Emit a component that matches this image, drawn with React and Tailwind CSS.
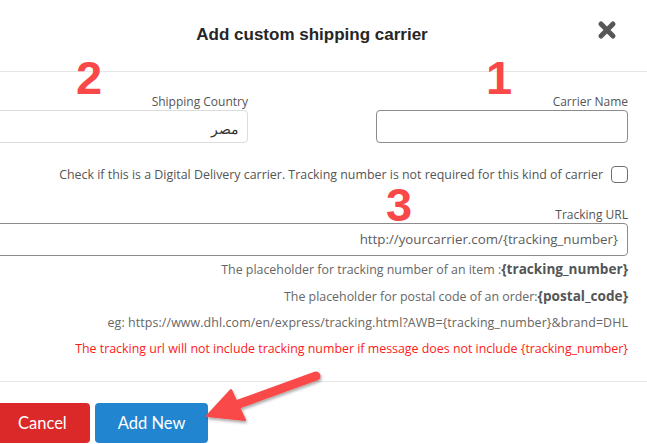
import React from 'react';

function CloseIcon() {
  return (
    <svg width="20" height="20" viewBox="0 0 20 20">
      <path d="M4 4 L16 16 M16 4 L4 16" stroke="#575757" strokeWidth="5" strokeLinecap="round" />
    </svg>
  );
}

function Arrow() {
  return (
    <svg className="pointer-events-none absolute left-0 top-0" width="647" height="444">
      <defs>
        <filter id="arrow-shadow" x="-20%" y="-20%" width="140%" height="140%">
          <feDropShadow dx="1" dy="2" stdDeviation="1.5" floodColor="#000" floodOpacity="0.35" />
        </filter>
      </defs>
      <g filter="url(#arrow-shadow)" fill="#f94848" stroke="#f94848">
        <line x1="316" y1="376" x2="236" y2="405" strokeWidth="9" strokeLinecap="round" />
        <polygon points="207,416 231,390 245,420" strokeWidth="2" strokeLinejoin="round" />
      </g>
    </svg>
  );
}

function Field({ label, children }) {
  return (
    <div className="w-[252px]">
      <div className="text-right text-[12px] leading-[17px] text-[#555]">{label}</div>
      {children}
    </div>
  );
}

export default function App() {
  return (
    <div className="relative h-[444px] w-[647px] overflow-hidden bg-white font-['Open_Sans',sans-serif]">
      <div className="ml-[-23px] w-[670px]">
        <div className="relative flex h-[72px] items-center justify-center border-b border-[#e6e6e6]">
          <h1 className="mt-[-2px] font-['Liberation_Sans',Arial,sans-serif] text-[17px] font-bold text-[#262626]">
            Add custom shipping carrier
          </h1>
          <button className="absolute right-[30px] top-[20px]">
            <CloseIcon />
          </button>
        </div>

        <div className="border-b border-[#e6e6e6] px-[19px] pt-[21px] pb-[19px]">
          <div className="flex justify-between">
            <Field label="Shipping Country">
              <div dir="rtl" className="flex h-[33px] items-center rounded-[4px] border border-[#dcdcdc] px-[8px] pt-[4px] text-[14px] text-[#333]">
                مصر
              </div>
            </Field>
            <Field label="Carrier Name">
              <div className="h-[33px] rounded-[4px] border border-[#8c8c8c]" />
            </Field>
          </div>

          <div className="mt-[23px] flex items-center justify-end gap-[8px] text-[12.4px] leading-[17px] text-[#555]">
            <span>Check if this is a Digital Delivery carrier. Tracking number is not required for this kind of carrier</span>
            <span className="h-[17px] w-[17px] rounded-[4px] border border-[#707070]" />
          </div>

          <div className="mt-[23px] text-right text-[12px] leading-[17px] text-[#555]">Tracking URL</div>
          <div className="flex h-[33px] items-center justify-end rounded-[4px] border border-[#8c8c8c] px-[9px] text-[13.3px] text-[#5c5c5c]">
            http://yourcarrier.com/{'{tracking_number}'}
          </div>

          <div className="text-right text-[12.4px] leading-[26px] text-[#666]">
            <div>
              The placeholder for tracking number of an item :
              <b className="text-[13.6px] text-[#555]">{'{tracking_number}'}</b>
            </div>
            <div>
              The placeholder for postal code of an order:
              <b className="text-[13.6px] text-[#555]">{'{postal_code}'}</b>
            </div>
            <div className="tracking-[0.1px]">
              eg: https://www.dhl.com/en/express/tracking.html?AWB={'{tracking_number}'}&amp;brand=DHL
            </div>
            <div className="text-[#ff1a1a]">
              The tracking url will not include tracking number if message does not include {'{tracking_number}'}
            </div>
          </div>
        </div>

        <div className="flex gap-[5px] pl-[18px] pt-[21px] font-['Lato',sans-serif] text-[16.5px] text-white">
          <button className="h-[40px] rounded-[4px] bg-[#db2828] px-[23px]">Cancel</button>
          <button className="h-[40px] rounded-[4px] bg-[#2185d0] px-[23px]">Add New</button>
        </div>
      </div>

      <span className="absolute left-[76px] top-[54px] font-['Liberation_Sans',Arial,sans-serif] text-[47px] font-bold leading-none text-[#f94848]">2</span>
      <span className="absolute left-[486px] top-[54px] font-['Liberation_Sans',Arial,sans-serif] text-[47px] font-bold leading-none text-[#f94848]">1</span>
      <span className="absolute left-[386px] top-[181px] font-['Liberation_Sans',Arial,sans-serif] text-[47px] font-bold leading-none text-[#f94848]">3</span>

      <Arrow />
    </div>
  );
}
